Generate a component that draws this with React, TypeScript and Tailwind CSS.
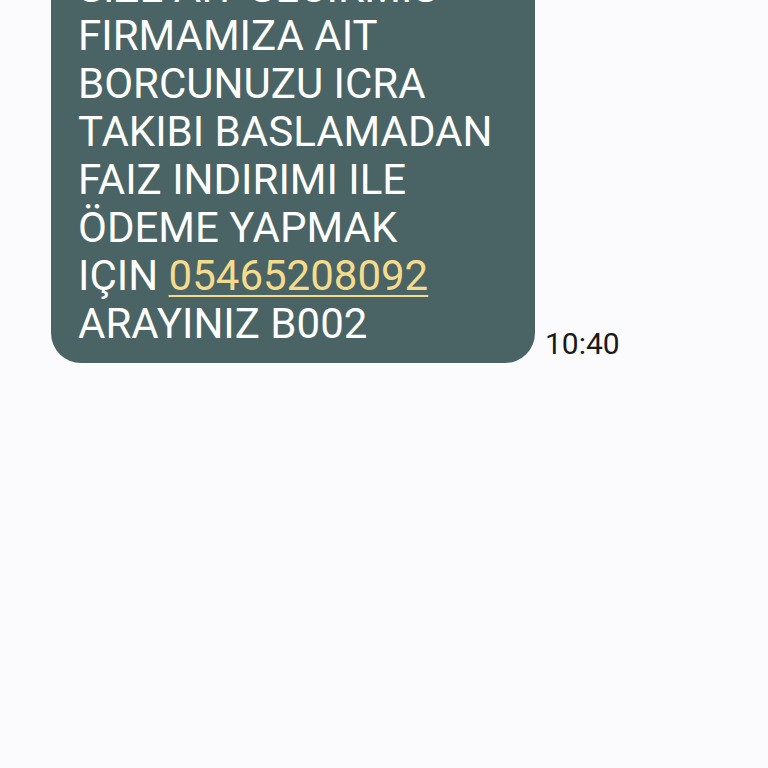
export default function App() {
  return (
    <div
      className="min-h-[768px] w-[768px] overflow-hidden bg-[#fbfbfe]"
      style={{ fontFamily: 'Roboto, "Liberation Sans", sans-serif' }}
    >
      <div className="flex items-end pl-[51px]">
        <div className="-mt-[51px] w-[484px] rounded-[30px] bg-[#4a6466] pb-[15px] pl-[27px] pr-[20px] pt-[15px] text-[42px] leading-[48px] text-white whitespace-nowrap">
          <div>SIZE AIT GECIKMIS</div>
          <div>FIRMAMIZA AIT</div>
          <div>BORCUNUZU ICRA</div>
          <div>TAKIBI BASLAMADAN</div>
          <div>FAIZ INDIRIMI ILE</div>
          <div>ÖDEME YAPMAK</div>
          <div>
            IÇIN{' '}
            <span className="text-[#f4dc8c] underline decoration-[2px] underline-offset-[5px]">05465208092</span>
          </div>
          <div>ARAYINIZ B002</div>
        </div>
        <div className="mb-[1px] ml-[10px] text-[30px] leading-[36px] text-[#1a1a1a]">10:40</div>
      </div>
    </div>
  );
}
